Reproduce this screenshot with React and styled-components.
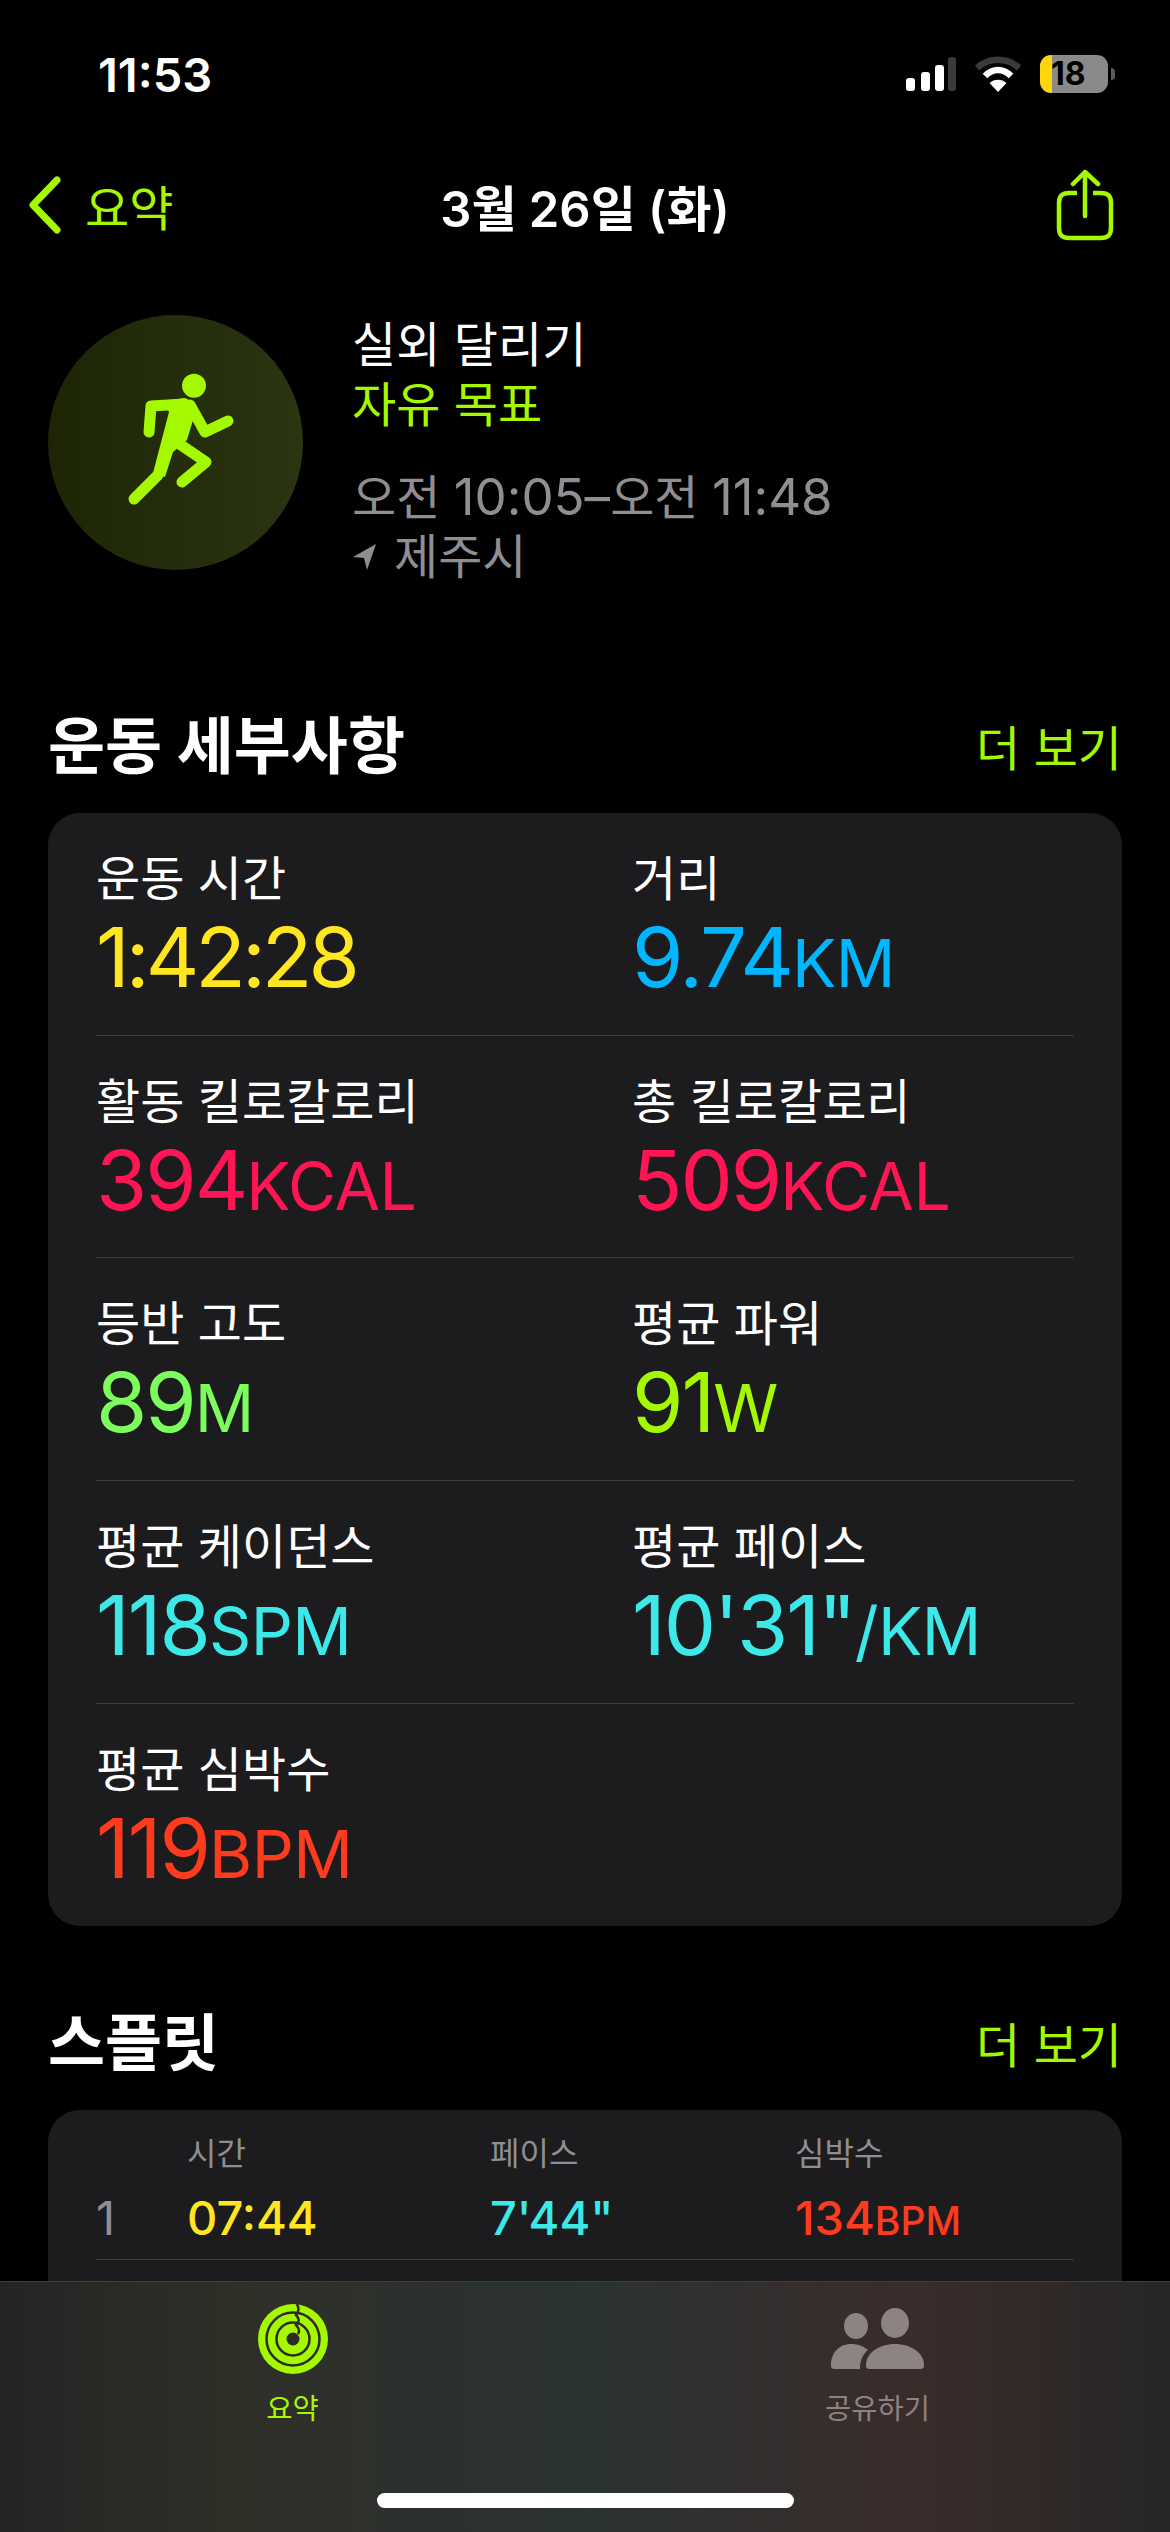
import { createGlobalStyle, styled } from 'styled-components'

const GlobalStyle = createGlobalStyle`
  html, body {
    margin: 0;
    padding: 0;
    background: #000;
  }
  * {
    box-sizing: border-box;
  }
`

const GREEN = '#a5f900'

const metrics = [
  [
    { label: '운동 시간', value: '1:42:28', color: '#ffe620', tight: true },
    { label: '거리', value: '9.74', unit: 'KM', color: '#02b5ff' },
  ],
  [
    { label: '활동 킬로칼로리', value: '394', unit: 'KCAL', color: '#ff1554' },
    { label: '총 킬로칼로리', value: '509', unit: 'KCAL', color: '#ff1554' },
  ],
  [
    { label: '등반 고도', value: '89', unit: 'M', color: '#7dfc5e' },
    { label: '평균 파워', value: '91', unit: 'W', color: GREEN },
  ],
  [
    { label: '평균 케이던스', value: '118', unit: 'SPM', color: '#3ce8e8' },
    { label: '평균 페이스', value: `10'31"`, unit: '/KM', color: '#3ce8e8' },
  ],
  [{ label: '평균 심박수', value: '119', unit: 'BPM', color: '#ff3b1f' }],
]

const Signal = () => (
  <svg width="50" height="34" viewBox="0 0 50 34">
    <rect x="0" y="21" width="9" height="13" rx="3" fill="#fff" />
    <rect x="15" y="15" width="9" height="19" rx="3" fill="#fff" />
    <rect x="29" y="8" width="9" height="26" rx="3" fill="#fff" />
    <rect x="42" y="0" width="8" height="34" rx="3" fill="#3a3a3c" />
  </svg>
)

const Wifi = () => (
  <svg width="48" height="36" viewBox="0 0 48 36" fill="none">
    <path d="M3 12 C15 1 33 1 45 12" stroke="#3a3a3c" strokeWidth="6.5" />
    <path d="M11 20 C19 12 29 12 37 20" stroke="#fff" strokeWidth="6.5" />
    <path d="M24 36 L15.500 27 C20 22.500 28 22.500 32.500 27 Z" fill="#fff" />
  </svg>
)

const Chevron = () => (
  <svg width="34" height="58" viewBox="0 0 34 58" fill="none">
    <path
      d="M29 4 L5 29 L29 54"
      stroke={GREEN}
      strokeWidth="7"
      strokeLinecap="round"
      strokeLinejoin="round"
    />
  </svg>
)

const ShareIcon = () => (
  <svg width="60" height="73" viewBox="0 0 60 73" fill="none">
    <path
      d="M22 24 H14 C7 24 4 27 4 34 V59 C4 66 7 69 14 69 H46 C53 69 56 66 56 59 V34 C56 27 53 24 46 24 H38"
      stroke={GREEN}
      strokeWidth="4.500"
    />
    <path
      d="M30 47 V3 M18 15 L30 3 L43 15"
      stroke={GREEN}
      strokeWidth="4.500"
      strokeLinecap="round"
      strokeLinejoin="round"
    />
  </svg>
)

const Runner = () => (
  <svg width="255" height="255" viewBox="0 0 255 255" fill="none">
    <circle cx="146" cy="70.700" r="12" fill={GREEN} />
    <g
      stroke={GREEN}
      strokeWidth="11"
      strokeLinecap="round"
      strokeLinejoin="round"
    >
      <path d="M101 117 L103 91 L137 89" />
      <path d="M142 90 L157 117 L180 106" />
      <path d="M130 128 L158 147 L134 167" />
      <path d="M110 160 L86 184" />
    </g>
    <path
      d="M115 86 L137 83 L149 92 L139 125 L125 137 L117 162 L105 158 L121 97 Z"
      fill={GREEN}
    />
  </svg>
)

const RingsIcon = () => (
  <svg width="72" height="70" viewBox="0 0 72 70" fill="none">
    <circle cx="36" cy="35" r="35" fill={GREEN} />
    <circle cx="36" cy="35" r="26.500" stroke="#2d2d26" strokeWidth="2.500" />
    <circle cx="36" cy="35" r="16.500" stroke="#2d2d26" strokeWidth="2.500" />
    <circle cx="36" cy="35" r="6.500" fill="#2d2d26" />
    <path
      d="M40 0 C42 4 42 8 39 11 C42 14 43 18 39 21 C42 24 43 27 41 30"
      stroke="#2d2d26"
      strokeWidth="2.500"
    />
  </svg>
)

const PeopleIcon = () => (
  <svg width="96" height="62" viewBox="0 0 96 62">
    <ellipse cx="26" cy="18" rx="12" ry="13" fill="#8d8382" />
    <ellipse cx="65" cy="15" rx="14" ry="15" fill="#8d8382" />
    <path
      d="M1 57 C1 45 9 36 21 36 C28 36 33 38 38 42 C33 46 30 52 30 61 H5 C2 61 1 60 1 57 Z"
      fill="#8d8382"
    />
    <path
      d="M36 57 C36 45 49 36 65 36 C81 36 94 45 94 57 C94 60 93 61 90 61 H40 C37 61 36 60 36 57 Z"
      fill="#8d8382"
    />
  </svg>
)

const LocationArrow = () => (
  <svg width="26" height="28" viewBox="0 0 26 28">
    <path d="M24 1 L15 27 L12 15 L1 14 Z" fill="#8e8e93" />
  </svg>
)

const App = () => {
  return (
    <Page>
      <GlobalStyle />
      <StatusBar>
        <Clock>11:53</Clock>
        <StatusIcons>
          <Signal />
          <Wifi />
          <Battery>18</Battery>
        </StatusIcons>
      </StatusBar>

      <NavBar>
        <BackLink>
          <Chevron />
          <span>요약</span>
        </BackLink>
        <NavTitle>3월 26일 (화)</NavTitle>
        <NavAction>
          <ShareIcon />
        </NavAction>
      </NavBar>

      <Summary>
        <Badge>
          <Runner />
        </Badge>
        <SummaryText>
          <SummaryLine>실외 달리기</SummaryLine>
          <SummaryLine $color={GREEN}>자유 목표</SummaryLine>
          <SummaryTime>
            <span>
              오전 <TimeDigits>10:05–</TimeDigits>오전 <TimeDigits>11:48</TimeDigits>
            </span>
          </SummaryTime>
          <SummaryLine $color="#8e8e93">
            <LocationArrow />
            제주시
          </SummaryLine>
        </SummaryText>
      </Summary>

      <SectionHead $top={108}>
        <SectionTitle>운동 세부사항</SectionTitle>
        <MoreLink>더 보기</MoreLink>
      </SectionHead>
      <Card>
        {metrics.map((row, index) => (
          <MetricRow key={index} $last={index === metrics.length - 1}>
            {row.map((item) => (
              <div key={item.label}>
                <MetricLabel>{item.label}</MetricLabel>
                <MetricValue $color={item.color} $tight={item.tight}>
                  {item.value}
                  {item.unit && <MetricUnit>{item.unit}</MetricUnit>}
                </MetricValue>
              </div>
            ))}
          </MetricRow>
        ))}
      </Card>

      <SectionHead $top={66}>
        <SectionTitle>스플릿</SectionTitle>
        <MoreLink>더 보기</MoreLink>
      </SectionHead>
      <SplitCard>
        <SplitHead>
          <span />
          <span>시간</span>
          <span>페이스</span>
          <span>심박수</span>
        </SplitHead>
        <SplitRow>
          <SplitIndex>1</SplitIndex>
          <SplitValue $color="#ffe620">07:44</SplitValue>
          <SplitValue $color="#3ce8e8">7'44"</SplitValue>
          <SplitValue $color="#ff3b1f">
            134<SplitUnit>BPM</SplitUnit>
          </SplitValue>
        </SplitRow>
      </SplitCard>

      <TabBar>
        <Tab $color={GREEN}>
          <TabIcon>
            <RingsIcon />
          </TabIcon>
          요약
        </Tab>
        <Tab $color="#8d8382">
          <TabIcon>
            <PeopleIcon />
          </TabIcon>
          공유하기
        </Tab>
        <HomeIndicator />
      </TabBar>
    </Page>
  )
}
export default App

const FONT = `Inter, "Noto Sans CJK KR", sans-serif`

const Page = styled.div`
  position: relative;
  width: 1170px;
  height: 2532px;
  overflow: hidden;
  background: #000;
  color: #fff;
  font-family: ${FONT};
`

const StatusBar = styled.div`
  height: 148px;
  padding: 0 62px 0 98px;
  display: flex;
  align-items: center;
  justify-content: space-between;
`

const Clock = styled.div`
  font-size: 47px;
  font-weight: 600;
`

const StatusIcons = styled.div`
  display: flex;
  align-items: center;
  gap: 18px;
`

const Battery = styled.div`
  position: relative;
  width: 68px;
  height: 38px;
  border-radius: 11px;
  background: linear-gradient(90deg, #ffd60a 12px, #8a8a8a 12px);
  color: #000;
  font-size: 32px;
  font-weight: 700;
  line-height: 38px;
  padding-left: 11px;

  &::after {
    content: '';
    position: absolute;
    right: -7px;
    top: 13px;
    width: 4px;
    height: 12px;
    border-radius: 0 4px 4px 0;
    background: #5a5a5a;
  }
`

const NavBar = styled.div`
  height: 114px;
  padding: 0 28px;
  display: grid;
  grid-template-columns: 1fr auto 1fr;
  align-items: center;
`

const BackLink = styled.div`
  display: flex;
  align-items: center;
  gap: 23px;
  color: ${GREEN};
  font-size: 48px;
`

const NavTitle = styled.div`
  font-size: 49px;
  font-weight: 600;
`

const NavAction = styled.div`
  padding-right: 27px;
  display: flex;
  justify-content: flex-end;
`

const Summary = styled.div`
  margin-top: 53px;
  padding-left: 48px;
  display: flex;
  gap: 49px;
`

const Badge = styled.div`
  width: 255px;
  height: 255px;
  border-radius: 50%;
  background: linear-gradient(90deg, #1d2505, #2b3512);
`

const SummaryText = styled.div`
  display: flex;
  flex-direction: column;
`

const SummaryLine = styled.div`
  height: 60px;
  font-size: 48px;
  line-height: 60px;
  color: ${(props) => props.$color || '#fff'};
  display: flex;
  align-items: center;
  gap: 16px;
`

const SummaryTime = styled(SummaryLine)`
  margin-top: 32px;
  color: #8e8e93;
`

const TimeDigits = styled.span`
  font-size: 51px;
`

const SectionHead = styled.div`
  margin: ${(props) => props.$top}px 0 18px;
  padding: 0 48px;
  height: 100px;
  display: flex;
  align-items: center;
  justify-content: space-between;
`

const SectionTitle = styled.div`
  padding-bottom: 6px;
  font-size: 62px;
  font-weight: 700;
`

const MoreLink = styled.div`
  font-size: 48px;
  color: ${GREEN};
`

const Card = styled.div`
  margin: 0 48px;
  padding: 0 48px;
  background: #1c1c1e;
  border-radius: 32px;
`

const MetricRow = styled.div`
  height: 222.7px;
  padding-top: 36px;
  display: grid;
  grid-template-columns: 536px 1fr;
  border-bottom: ${(props) => (props.$last ? 'none' : '1px solid #3d3d3f')};
`

const MetricLabel = styled.div`
  font-size: 48px;
  line-height: 60px;
`

const MetricValue = styled.div`
  font-size: 83px;
  line-height: 96px;
  font-weight: 400;
  letter-spacing: ${(props) => (props.$tight ? '-4px' : '-2px')};
  color: ${(props) => props.$color};
`

const MetricUnit = styled.span`
  font-size: 66px;
  letter-spacing: -0.5px;
`

const SplitCard = styled(Card)`
  padding-bottom: 200px;
`

const SplitGrid = styled.div`
  display: grid;
  grid-template-columns: 91px 303px 305px 1fr;
`

const SplitHead = styled(SplitGrid)`
  padding-top: 22px;
  font-size: 32px;
  line-height: 44px;
  color: #8e8e93;
`

const SplitRow = styled(SplitGrid)`
  padding-top: 8px;
  height: 84px;
  border-bottom: 1px solid #3d3d3f;
  font-size: 47px;
  line-height: 68px;
`

const SplitIndex = styled.div`
  color: #8e8e93;
`

const SplitValue = styled.div`
  font-weight: 500;
  color: ${(props) => props.$color};
`

const SplitUnit = styled.span`
  font-size: 39px;
`

const TabBar = styled.div`
  position: absolute;
  left: 0;
  right: 0;
  top: 2281px;
  bottom: 0;
  display: grid;
  grid-template-columns: 1fr 1fr;
  border-top: 1px solid #3e3e40;
  background: linear-gradient(
    90deg,
    #242424 0%,
    #2f2f28 20%,
    #2a3232 50%,
    #3a2c2a 78%,
    #262626 100%
  );
`

const Tab = styled.div`
  display: flex;
  flex-direction: column;
  align-items: center;
  padding-top: 22px;
  font-size: 28.5px;
  line-height: 40px;
  color: ${(props) => props.$color};
`

const TabIcon = styled.div`
  height: 70px;
  margin-bottom: 15px;
  display: flex;
  align-items: center;
`

const HomeIndicator = styled.div`
  position: absolute;
  left: 377px;
  bottom: 24px;
  width: 417px;
  height: 15px;
  border-radius: 8px;
  background: #fff;
`
